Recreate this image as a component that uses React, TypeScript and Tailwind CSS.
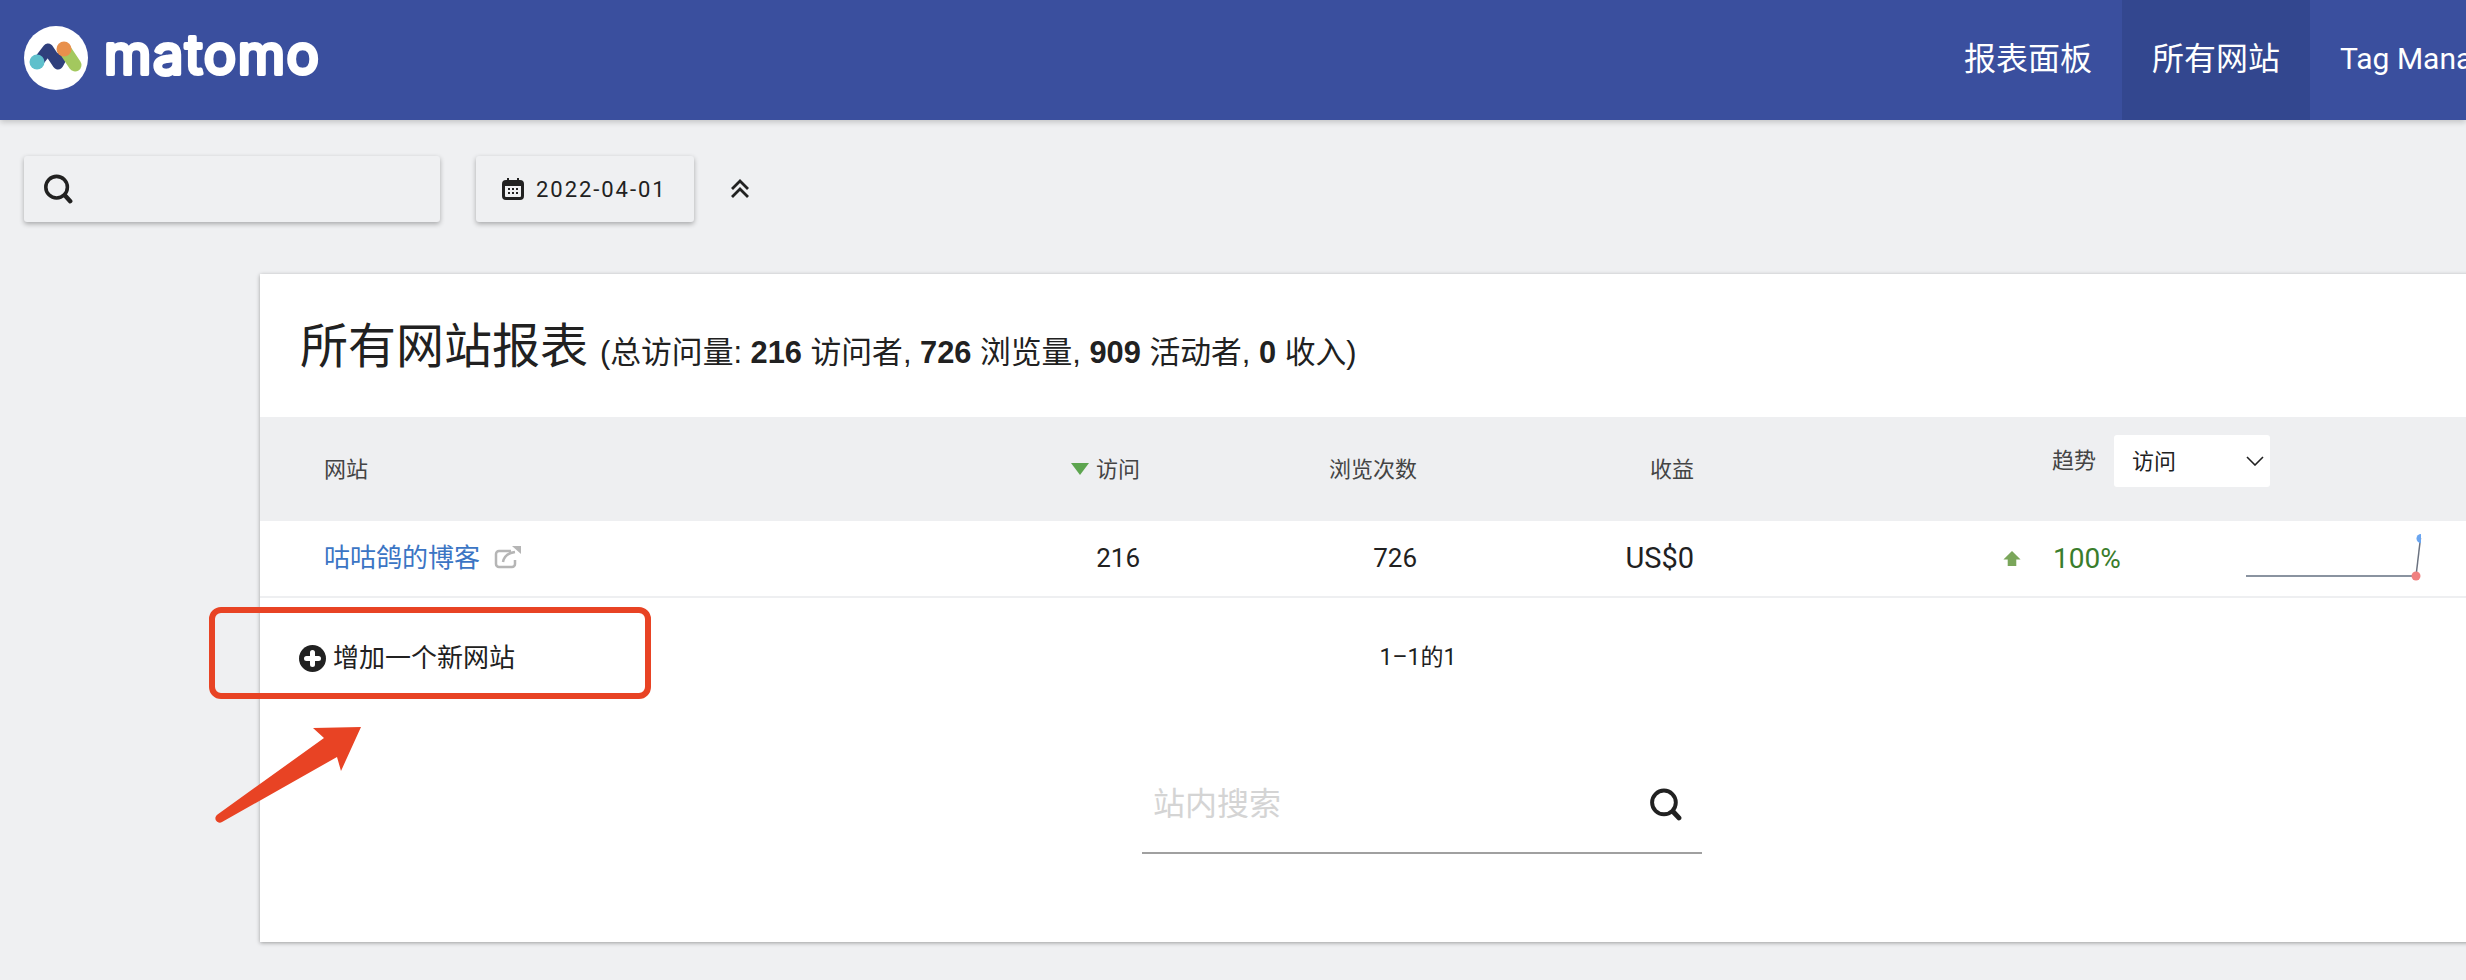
const FONT = "font-['Roboto','Noto_Sans_CJK_SC',sans-serif]";

function SearchIcon({ className }: { className: string }) {
  return (
    <svg viewBox="0 0 32 32" className={className} fill="none" stroke="#212121" strokeLinecap="round">
      <circle cx="14.500" cy="14" r="11.500" strokeWidth="3.800" />
      <path d="M23.500 23l5.500 6" strokeWidth="4.800" />
    </svg>
  );
}

function Logo() {
  return (
    <svg viewBox="0 0 64 64" className="w-16 h-16 shrink-0">
      <circle cx="32" cy="32" r="32" fill="#fff" />
      <path d="M14 36L24 23L34 38L41 25" fill="none" stroke="#2f3f7c" strokeWidth="11" strokeLinecap="round" strokeLinejoin="round" />
      <circle cx="13" cy="36" r="7.500" fill="#5fc0cc" />
      <path d="M41 24l10 15" stroke="#a3c85e" strokeWidth="13" strokeLinecap="round" />
      <circle cx="40" cy="23" r="7.500" fill="#e8904c" />
    </svg>
  );
}

function Wordmark() {
  return (
    <svg viewBox="0 0 226 72" className="w-[226px] h-[72px] shrink-0">
      <text
        x="3"
        y="52"
        fontFamily="Inter, sans-serif"
        fontSize="54"
        fontWeight="400"
        fill="#fff"
        stroke="#fff"
        strokeWidth="4"
        strokeLinejoin="round"
        textLength="215"
        lengthAdjust="spacing"
      >
        matomo
      </text>
    </svg>
  );
}

function NavItem({ label, active, small }: { label: string; active?: boolean; small?: boolean }) {
  return (
    <div className={`h-[120px] px-[30px] pb-[3px] flex items-center shrink-0 whitespace-nowrap text-white ${small ? "text-[30px]" : "text-[32px]"} ${active ? "bg-[#33478f]" : ""}`}>
      {label}
    </div>
  );
}

function App() {
  return (
    <div className={`relative w-[2466px] h-[980px] overflow-hidden bg-[#eff0f2] text-[#212121] ${FONT}`}>
      <header className="h-[120px] bg-[#3a4f9e] flex shadow-[0_2px_6px_rgba(0,0,0,0.2)] relative">
        <div className="w-[1934px] shrink-0 flex items-center pl-6 gap-[13px] pb-[4px]">
          <Logo />
          <Wordmark />
        </div>
        <NavItem label="报表面板" />
        <NavItem label="所有网站" active />
        <NavItem label="Tag Manager" small />
      </header>

      <div className="flex items-center pl-6 pt-9">
        <div className="w-[416px] h-[66px] rounded-[3px] bg-[#eff0f2] shadow-[0_2px_5px_rgba(0,0,0,0.3)] flex items-center pl-[19px]">
          <SearchIcon className="w-[30px] h-[30px]" />
        </div>
        <div className="ml-9 w-[218px] h-[66px] rounded-[3px] bg-[#eff0f2] shadow-[0_2px_5px_rgba(0,0,0,0.3)] flex items-center pl-[26px] gap-3 text-[22px] tracking-[1.950px]">
          <svg viewBox="0 0 22 22" className="w-[22px] h-[22px] shrink-0" fill="#212121">
            <path fillRule="evenodd" d="M5 0h2v2h8V0h2v2h1a4 4 0 0 1 4 4v12a4 4 0 0 1-4 4H4a4 4 0 0 1-4-4V6a4 4 0 0 1 4-4h1V0zM3 8v10a1 1 0 0 0 1 1h14a1 1 0 0 0 1-1V8H3z" />
            <path d="M6 10h2v2H6zM10 10h2v2h-2zM14 10h2v2h-2zM6 14h2v2H6zM10 14h2v2h-2zM14 14h2v2h-2z" />
          </svg>
          <span>2022-04-01</span>
        </div>
        <svg viewBox="0 0 20 20" className="ml-[36px] w-5 h-5" fill="none" stroke="#212121" strokeWidth="2.800">
          <path d="M2 10l8-8 8 8M2 18l8-8 8 8" />
        </svg>
      </div>

      <main className="ml-[260px] mt-[52px] w-[2300px] h-[668px] bg-white shadow-[0_1px_4px_rgba(0,0,0,0.35)]">
        <div className="h-[143px] pl-[40px] pt-[45px] flex items-baseline whitespace-nowrap">
          <h1 className="text-[48px] leading-[56px] font-normal">所有网站报表</h1>
          <span className="ml-[12px] text-[30.800px] font-['Liberation_Sans','Noto_Sans_CJK_SC',sans-serif]">
            (总访问量: <b>216</b> 访问者, <b>726</b> 浏览量, <b>909</b> 活动者, <b>0</b> 收入)
          </span>
        </div>

        <div className="grid grid-cols-[740px_140px_277px_277px_1fr] h-[104px] bg-[#eeeff1] text-[22px] text-[#444]">
          <div className="pl-[64px] flex items-center">网站</div>
          <div className="flex items-center justify-end gap-[7px]">
            <svg viewBox="0 0 18 12" className="w-[18px] h-3"><path d="M0 0h18L9 12z" fill="#5da54f" /></svg>
            访问
          </div>
          <div className="flex items-center justify-end">浏览次数</div>
          <div className="flex items-center justify-end">收益</div>
          <div className="pl-[358px] pt-[18px] flex items-start gap-[18px]">
            <span className="leading-[52px]">趋势</span>
            <div className="w-[156px] h-[52px] rounded-[3px] bg-white text-[#212121] flex items-center justify-between pl-[18px] pr-[6px]">
              访问
              <svg viewBox="0 0 18 10" className="w-[18px] h-[10px]" fill="none" stroke="#212121" strokeWidth="1.600"><path d="M1 1l8 8 8-8" /></svg>
            </div>
          </div>
        </div>

        <div className="grid grid-cols-[740px_140px_277px_277px_1fr] h-[77px] border-b-2 border-[#eeeff1] text-[26px]">
          <div className="pl-[64px] flex items-center gap-[14px] text-[#3b75c4]">
            咕咕鸽的博客
            <svg viewBox="0 0 28 24" className="w-[28px] h-6 -mt-1" fill="none" stroke="#b5b5b5" strokeWidth="2.500">
              <path d="M17 6H5a3 3 0 0 0-3 3v10a3 3 0 0 0 3 3h13a3 3 0 0 0 3-3v-4M9 17c1-6 5-9 12-10" />
              <path d="M18 1h9v8z" fill="#b5b5b5" stroke="none" />
            </svg>
          </div>
          <div className="flex items-center justify-end">216</div>
          <div className="flex items-center justify-end">726</div>
          <div className="flex items-center justify-end text-[29px]">US$0</div>
          <div className="pl-[309px] flex items-center">
            <svg viewBox="0 0 16 14" className="w-[18px] h-[15px] shrink-0"><path d="M8 0l8 8h-4v6H4V8H0z" fill="#7aa65a" /></svg>
            <span className="ml-[32px] w-[67px] text-[#3a7d2c] text-[28px]">100%</span>
            <svg viewBox="0 0 176 50" className="ml-[126px] w-[176px] h-[50px] shrink-0">
              <path d="M0 42h170" stroke="#8a93a0" strokeWidth="2" fill="none" />
              <path d="M170 42l4.500-38" stroke="#6b7280" strokeWidth="1.500" fill="none" />
              <circle cx="170" cy="42" r="4.500" fill="#f08080" />
              <path d="M175 0a4.500 4.500 0 0 0 0 9z" fill="#6aa5f0" />
            </svg>
          </div>
        </div>

        <div className="relative h-[118px] flex items-center justify-center text-[26px] pl-[16px] pt-[2px]">
          <div className="absolute left-[39px] top-[41px] flex items-center gap-[7px]">
            <svg viewBox="0 0 27 27" className="w-[27px] h-[27px]">
              <circle cx="13.500" cy="13.500" r="13.500" fill="#212121" />
              <path d="M13.500 7.500v12M7.500 13.500h12" stroke="#fff" strokeWidth="5" strokeLinecap="round" />
            </svg>
            增加一个新网站
          </div>
          <span className="text-[23px]">1–1的1</span>
        </div>

        <div className="ml-[882px] mt-[28px] w-[560px] h-[110px] border-b-2 border-[#a0a0a0] flex items-center justify-between pl-[11px] pr-[20px]">
          <span className="text-[32px] text-[#d4d4d4] mt-[12px]">站内搜索</span>
          <SearchIcon className="w-[33px] h-[33px] mt-[12px]" />
        </div>
      </main>

      <div className="absolute left-[209px] top-[607px] w-[442px] h-[92px] border-[6px] border-[#e84324] rounded-[12px]" />
      <svg viewBox="0 0 160 110" className="absolute left-[212px] top-[722px] w-[160px] h-[110px]">
        <path d="M149 5L101 6L112 16L5.500 92.500a4 4 0 0 0 4.500 7.500L125 35L129 49z" fill="#e84324" />
      </svg>
    </div>
  );
}

export default App;
